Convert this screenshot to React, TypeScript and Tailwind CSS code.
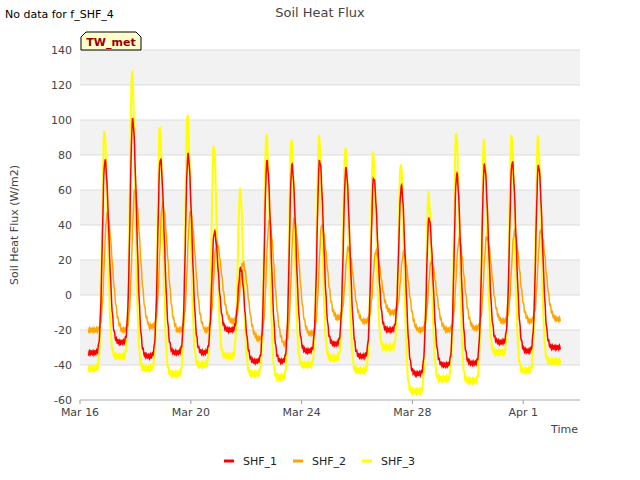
import React from "react";

const X0 = 80, X1 = 580, Y0 = 50, Y1 = 400;
const dayX = (d: number) => 80 + (d - 16) * 27.7;
const valY = (v: number) => Y0 + (140 - v) * 1.75;

const peakDays = [16.9, 17.9, 18.9, 19.9, 20.85, 21.8, 22.75, 23.65, 24.65, 25.6, 26.6, 27.6, 28.6, 29.6, 30.6, 31.6, 32.55];
const P1 = [77, 100, 78, 80, 36, 15, 76, 74, 77, 72, 67, 62, 44, 69, 74, 76, 74];
const P2 = [46, 60, 52, 47, 30, 18, 42, 43, 40, 27, 25, 24, 19, 31, 33, 36, 37];
const P3 = [94, 127, 95, 103, 85, 60, 92, 89, 90, 84, 81, 75, 58, 93, 88, 91, 90];
const M1 = [-33, -27, -35, -33, -33, -20, -38, -38, -32, -28, -35, -20, -45, -40, -39, -27, -32, -30];
const M2 = [-20, -20, -18, -20, -20, -15, -25, -28, -22, -13, -15, -10, -20, -20, -19, -15, -15, -14];
const M3 = [-42, -35, -42, -45, -40, -35, -45, -47, -40, -36, -43, -30, -55, -48, -49, -33, -43, -38];

function series(P: number[], M: number[], off: number, sr: number, sf: number) {
  const pts: string[] = [];
  for (let d = 16.3; d <= 33.35; d += 0.01) {
    let i = 0;
    while (i < peakDays.length - 1 && d > peakDays[i] + off + 0.5) i++;
    const pk = peakDays[i] + off;
    const dt = d - pk;
    let v: number;
    if (dt < 0) {
      const lo = M[i];
      v = lo + (P[i] - lo) * Math.exp(-(dt * dt) / (2 * sr * sr));
    } else {
      const lo = M[i + 1];
      v = lo + (P[i] - lo) * Math.exp(-(dt * dt) / (2 * sf * sf));
    }
    v += Math.sin(d * 97) * 1.2;
    pts.push(`${dayX(d).toFixed(1)},${valY(v).toFixed(1)}`);
  }
  return pts.join(" ");
}

const s1 = series(P1, M1, 0, 0.09, 0.14);
const s2 = series(P2, M2, 0.08, 0.1, 0.18);
const s3 = series(P3, M3, -0.02, 0.08, 0.11);

const yTicks = [140, 120, 100, 80, 60, 40, 20, 0, -20, -40, -60];
const bands = [[120, 140], [80, 100], [40, 60], [0, 20], [-40, -20]];
const xTicks = [["Mar 16", 16], ["Mar 20", 20], ["Mar 24", 24], ["Mar 28", 28], ["Apr 1", 32]] as const;

export default function App() {
  return (
    <div className="relative w-[640px] h-[480px] bg-white" style={{ fontFamily: '"DejaVu Sans", sans-serif' }}>
      <div className="absolute left-[5px] top-[7px] text-[11px] text-black">No data for f_SHF_4</div>
      <div className="absolute left-0 right-0 top-[3px] text-center text-[13px] text-[#444]">Soil Heat Flux</div>
      <svg width="640" height="480" className="block">
        <rect x={X0} y={Y0} width={X1 - X0} height={Y1 - Y0} fill="#fff" />
        {bands.map(([a, b]) => (
          <rect key={a} x={X0} y={valY(b)} width={X1 - X0} height={valY(a) - valY(b)} fill="#f2f2f2" />
        ))}
        {yTicks.map((t) => (
          <g key={t}>
            <line x1={X0} x2={X1} y1={valY(t)} y2={valY(t)} stroke="#dcdcdc" />
            <text x={72} y={valY(t) + 4} textAnchor="end" fontSize="11" fill="#444">{t}</text>
          </g>
        ))}
        {xTicks.map(([l, d]) => (
          <g key={l}>
            <line x1={dayX(d)} x2={dayX(d)} y1={Y1} y2={Y1 + 4} stroke="#999" />
            <text x={dayX(d)} y={Y1 + 16} textAnchor="middle" fontSize="11" fill="#444">{l}</text>
          </g>
        ))}
        <line x1={X0} x2={X1} y1={Y1} y2={Y1} stroke="#bbb" />
        <polyline points={s3} fill="none" stroke="#ffff00" strokeWidth="2" />
        <polyline points={s2} fill="none" stroke="#ffa500" strokeWidth="1.5" />
        <polyline points={s1} fill="none" stroke="#ff0000" strokeWidth="1.5" />
        <text x={578} y={433} textAnchor="end" fontSize="11" fill="#444">Time</text>
        <text x={18} y={225} textAnchor="middle" fontSize="11" fill="#444" transform="rotate(-90 18 225)">Soil Heat Flux (W/m2)</text>
        <path d="M81,50 L81,37 L86,32 L136,32 L141,37 L141,50 Z" fill="#ffffcc" stroke="#000" />
        <text x={111} y={46} textAnchor="middle" fontSize="11" fontWeight="bold" fill="#990000">TW_met</text>
        {[["SHF_1", "#ff0000", 224], ["SHF_2", "#ffa500", 293], ["SHF_3", "#ffff00", 362]].map(([l, c, x]) => (
          <g key={l as string}>
            <line x1={x as number} x2={(x as number) + 10} y1={461} y2={461} stroke={c as string} strokeWidth="3" />
            <text x={(x as number) + 19} y={465} fontSize="11" fill="#222">{l}</text>
          </g>
        ))}
      </svg>
    </div>
  );
}
